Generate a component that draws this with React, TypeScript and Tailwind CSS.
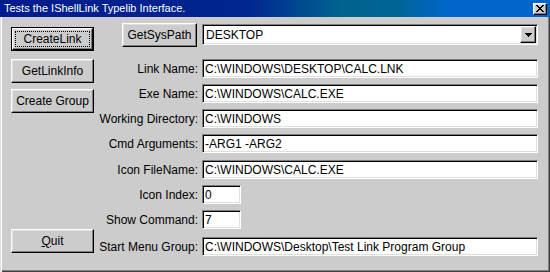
type Row = {
  label: string
  value: string
  top: string
  narrow?: boolean
}

const rows: Row[] = [
  { label: 'Link Name:', value: 'C:\\WINDOWS\\DESKTOP\\CALC.LNK', top: 'mt-[12px]' },
  { label: 'Exe Name:', value: 'C:\\WINDOWS\\CALC.EXE', top: 'mt-[6px]' },
  { label: 'Working Directory:', value: 'C:\\WINDOWS', top: 'mt-[6px]' },
  { label: 'Cmd Arguments:', value: '-ARG1 -ARG2', top: 'mt-[6px]' },
  { label: 'Icon FileName:', value: 'C:\\WINDOWS\\CALC.EXE', top: 'mt-[7px]' },
  { label: 'Icon Index:', value: '0', top: 'mt-[6px]', narrow: true },
  { label: 'Show Command:', value: '7', top: 'mt-[6px]', narrow: true },
  { label: 'Start Menu Group:', value: 'C:\\WINDOWS\\Desktop\\Test Link Program Group', top: 'mt-[8px]' },
]

const raised =
  'border border-t-white border-l-white border-r-black border-b-black shadow-[inset_-1px_-1px_#808080,inset_1px_1px_#dfdfdf] bg-[#cccccc]'

const sunken =
  'border border-t-[#808080] border-l-[#808080] border-r-white border-b-white shadow-[inset_1px_1px_#000,inset_-1px_-1px_#dfdfdf] bg-white'

function Button({ children, className = '' }: { children: React.ReactNode; className?: string }) {
  return (
    <div className={`${raised} h-[24px] flex items-center justify-center text-[12px] text-black ${className}`}>
      {children}
    </div>
  )
}

function Field({ value, narrow }: { value: string; narrow?: boolean }) {
  return (
    <div className={`${sunken} h-[19px] flex items-center pl-[2px] text-[12px] text-black whitespace-nowrap overflow-hidden ${narrow ? 'w-[39px]' : 'flex-1'}`}>
      {value}
    </div>
  )
}

function CloseButton() {
  return (
    <div className={`${raised} w-[14px] h-[12px] flex items-center justify-center`}>
      <svg width="8" height="7" viewBox="0 0 8 7" shapeRendering="crispEdges">
        <path d="M0 0h2v1h1v1h2v-1h1v-1h2v1h-1v1h-1v1h-1v1h1v1h1v1h1v1h-2v-1h-1v-1h-2v1h-1v1h-2v-1h1v-1h1v-1h1v-1h-1v-1h-1v-1h-1z" fill="#000" />
      </svg>
    </div>
  )
}

export default function App() {
  return (
    <div className="w-[550px] h-[272px] flex flex-col bg-[#cccccc] font-['Liberation_Sans',Arial,sans-serif] select-none">
      <div className="h-[17px] flex items-center bg-[linear-gradient(to_right,#001b8e_0%,#00268f_45%,#00648f_62%,#006495_72%,#0066cc_82%,#0066cc_100%)] pl-[4px] pr-[3px]">
        <span className="text-white text-[11px] leading-none flex-1">Tests the IShellLink Typelib Interface.</span>
        <CloseButton />
      </div>

      <div className="flex-1 flex shadow-[inset_1px_0_#dfdfdf,inset_2px_0_#fff,inset_-1px_-1px_#404040,inset_-2px_-2px_#808080]">
        <div className="w-[94px] pl-[11px] flex flex-col">
          <div className="mt-[10px] border border-black">
            <div className={`${raised} h-[22px] flex p-[2px] text-[12px] text-black`}>
              <div className="flex-1 border border-dotted border-black flex items-center justify-center">CreateLink</div>
            </div>
          </div>
          <Button className="mt-[8px]">GetLinkInfo</Button>
          <Button className="mt-[6px]">Create Group</Button>
          <Button className="mt-auto mb-[19px]">
            <span><span className="underline">Q</span>uit</span>
          </Button>
        </div>

        <div className="flex-1 pr-[12px] flex flex-col">
          <div className="mt-[6px] flex items-start">
            <div className="w-[108px] flex justify-end pr-[5px]">
              <Button className="w-[75px]">GetSysPath</Button>
            </div>
            <div className={`${sunken} flex-1 h-[21px] mt-[1px] flex items-center pl-[3px] pr-[1px] text-[12px] text-black`}>
              <span className="flex-1">DESKTOP</span>
              <div className={`${raised} w-[16px] h-[17px] flex items-center justify-center`}>
                <svg width="7" height="4" viewBox="0 0 7 4" shapeRendering="crispEdges">
                  <path d="M0 0h7v1h-1v1h-1v1h-1v1h-1v-1h-1v-1h-1v-1h-1z" fill="#000" />
                </svg>
              </div>
            </div>
          </div>

          {rows.map((row) => (
            <div key={row.label} className={`${row.top} flex items-center`}>
              <div className="w-[108px] pr-[4px] text-right text-[12px] text-black whitespace-nowrap">{row.label}</div>
              <Field value={row.value} narrow={row.narrow} />
            </div>
          ))}
        </div>
      </div>
    </div>
  )
}
